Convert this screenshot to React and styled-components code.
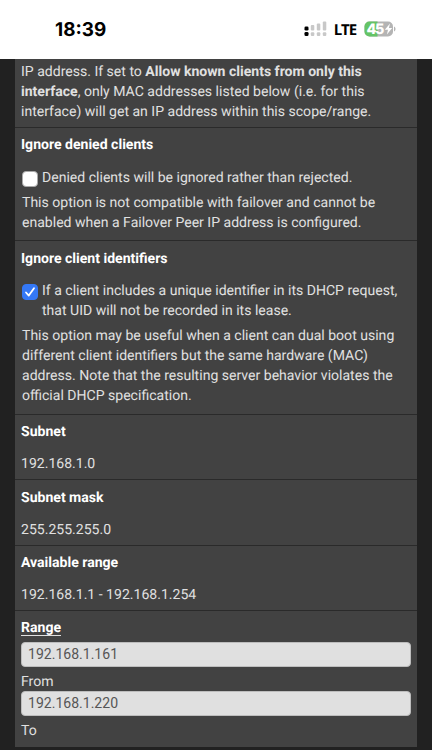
import { useState } from 'react'
import styled, { createGlobalStyle } from 'styled-components'

const GlobalStyle = createGlobalStyle`
  * {
    box-sizing: border-box;
  }

  body {
    margin: 0;
    background-color: #212121;
    color: #e0e0e0;
    font-family: Roboto, sans-serif;
    font-size: 14.05px;
    line-height: 20px;
    text-rendering: geometricPrecision;
  }
`

const Screen = styled.div`
  height: 750px;
  overflow: hidden;
`

const StatusBar = styled.header`
  display: flex;
  align-items: center;
  justify-content: space-between;
  height: 59px;
  padding: 0 36px 0 55px;
  background-color: #fff;
  color: #000;
  font-family: Inter, sans-serif;
`

const Clock = styled.span`
  font-size: 18.9px;
  font-weight: 700;
`

const StatusIcons = styled.div`
  display: flex;
  align-items: center;
  padding-bottom: 1px;
`

const Network = styled.span`
  margin: 0 8px 0 7px;
  padding-top: 1px;
  font-family: 'Open Sans', sans-serif;
  font-size: 15px;
  font-weight: 700;
  letter-spacing: -1.1px;
`

const Panel = styled.main`
  width: 402px;
  margin: 0 auto;
  background-color: #424242;
`

const Intro = styled.p`
  height: 68px;
  margin: 0;
  padding: 3px 6px 0;
`

const Row = styled.section`
  height: ${(props) => props.$height}px;
  padding: 7.4px 6px 0;
  border-top: 1px solid #2a2a2a;
`

const Label = styled.div`
  margin-bottom: ${(props) => props.$gap ?? 12}px;
  color: #fff;
  font-weight: 700;

  span {
    display: inline-block;
    height: 18px;
    border-bottom: 1px solid #e0e0e0;
  }
`

const CheckLabel = styled.label`
  display: flex;
  gap: 4px;
  padding-left: 1px;
`

const Checkbox = styled.input`
  appearance: none;
  flex: none;
  width: 16px;
  height: 16px;
  margin: 3px 0 0;
  border: 1px solid #a9a9a9;
  border-radius: 4px;
  background-color: #fff;

  &:checked {
    border-color: #3478f6;
    background: #3478f6
      url("data:image/svg+xml,%3Csvg xmlns='http://www.w3.org/2000/svg' viewBox='0 0 14 14'%3E%3Cpath d='M3 7.5 5.8 10.6 11 3.2' fill='none' stroke='white' stroke-width='1.8' stroke-linecap='round' stroke-linejoin='round'/%3E%3C/svg%3E");
  }
`

const Help = styled.p`
  margin: 5px 0 0;
  padding-left: 1px;
`

const Field = styled.input`
  display: block;
  width: 100%;
  height: 25px;
  padding: 0 6px 1px;
  border: 1px solid #bdbdbd;
  border-radius: 4px;
  background-color: #e0e0e0;
  color: #555;
  font: inherit;
`

const FieldName = styled.div`
  margin: 5px 0 -1px;
`

function SignalIcon() {
  return (
    <svg width="23" height="16" viewBox="0 0 23 16">
      <g fill="#c8c8c8">
        <rect x="6.8" y="4" width="3.5" height="5.5" rx="1" />
        <rect x="12.8" y="2.5" width="3.5" height="7" rx="1" />
        <rect x="18.8" y="0.5" width="3.5" height="9" rx="1" />
        <rect x="6.8" y="11.3" width="3.5" height="3.7" rx="1" />
        <rect x="12.8" y="11.3" width="3.5" height="3.7" rx="1" />
        <rect x="18.8" y="11.3" width="3.5" height="3.7" rx="1" />
      </g>
      <rect x="0.5" y="5.5" width="4" height="4" rx="1.3" />
      <rect x="0.5" y="11" width="4" height="4" rx="1.3" />
    </svg>
  )
}

function BatteryIcon() {
  return (
    <svg width="32" height="16" viewBox="0 0 32 16">
      <rect x="0.5" y="0.5" width="28.5" height="15" rx="5" fill="#b4b4b4" />
      <path d="M13.5 .5h-8a5 5 0 0 0-5 5v5a5 5 0 0 0 5 5h8z" fill="#65c466" />
      <path d="M30 5.5c2 .7 2 4.3 0 5z" fill="#b4b4b4" />
      <text x="2.4" y="13.2" fill="#fff" fontFamily="Inter" fontSize="14.3" fontWeight="800" textLength="18">
        45
      </text>
      <path d="M26 2.6 20.8 8.8H24L22.9 13.4 28.2 7.1H24.9z" fill="#fff" />
    </svg>
  )
}

function App() {
  const [ignoreDenied, setIgnoreDenied] = useState(false)
  const [ignoreUids, setIgnoreUids] = useState(true)
  const [from, setFrom] = useState('192.168.1.161')
  const [to, setTo] = useState('192.168.1.220')

  return (
    <Screen>
      <GlobalStyle />
      <StatusBar>
        <Clock>18:39</Clock>
        <StatusIcons>
          <SignalIcon />
          <Network>LTE</Network>
          <BatteryIcon />
        </StatusIcons>
      </StatusBar>
      <Panel>
        <Intro>
          IP address. If set to <strong>Allow known clients from only this<br />
          interface</strong>, only MAC addresses listed below (i.e. for this<br />
          interface) will get an IP address within this scope/range.
        </Intro>
        <Row $height={113.4}>
          <Label $gap={12.6}>Ignore denied clients</Label>
          <CheckLabel>
            <Checkbox
              type="checkbox"
              checked={ignoreDenied}
              onChange={(e) => setIgnoreDenied(e.target.checked)}
            />
            Denied clients will be ignored rather than rejected.
          </CheckLabel>
          <Help>
            This option is not compatible with failover and cannot be<br />
            enabled when a Failover Peer IP address is configured.
          </Help>
        </Row>
        <Row $height={173.6}>
          <Label $gap={12.6}>Ignore client identifiers</Label>
          <CheckLabel>
            <Checkbox
              type="checkbox"
              checked={ignoreUids}
              onChange={(e) => setIgnoreUids(e.target.checked)}
            />
            <span>
              If a client includes a unique identifier in its DHCP request,<br />
              that UID will not be recorded in its lease.
            </span>
          </CheckLabel>
          <Help>
            This option may be useful when a client can dual boot using<br />
            different client identifiers but the same hardware (MAC)<br />
            address. Note that the resulting server behavior violates the<br />
            official DHCP specification.
          </Help>
        </Row>
        <Row $height={65.3}>
          <Label>Subnet</Label>
          192.168.1.0
        </Row>
        <Row $height={65.3}>
          <Label>Subnet mask</Label>
          255.255.255.0
        </Row>
        <Row $height={65.3}>
          <Label>Available range</Label>
          192.168.1.1 - 192.168.1.254
        </Row>
        <Row $height={137.1}>
          <Label $gap={4}>
            <span>Range</span>
          </Label>
          <Field value={from} onChange={(e) => setFrom(e.target.value)} />
          <FieldName>From</FieldName>
          <Field value={to} onChange={(e) => setTo(e.target.value)} />
          <FieldName>To</FieldName>
        </Row>
      </Panel>
    </Screen>
  )
}

export default App
